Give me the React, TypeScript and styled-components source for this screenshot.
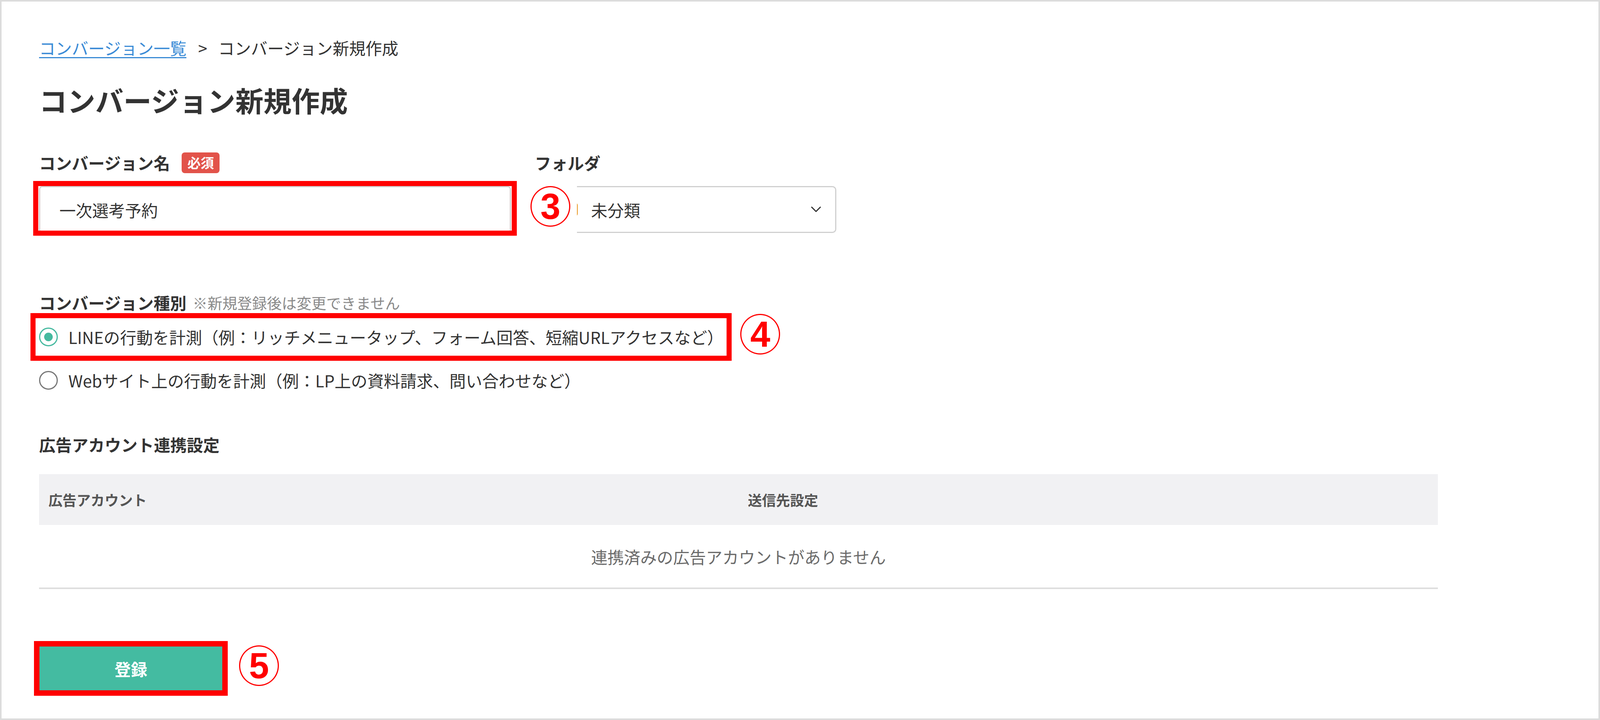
import React from "react";
import styled, { createGlobalStyle } from "styled-components";

const GlobalStyle = createGlobalStyle`
  html, body { margin: 0; padding: 0; background: #ffffff; }
  * { box-sizing: border-box; }
`;

const FONT = `"Noto Sans CJK JP", "Noto Sans", sans-serif`;

const Frame = styled.div`
  width: 100%;
  height: 100vh;
  min-height: 1842px;
  border: 4px solid #dcdcdc;
  padding: 88px 0 0 96px;
  background: #ffffff;
  font-family: ${FONT};
  color: #333333;
  display: flex;
  flex-direction: column;
  align-items: flex-start;
  overflow: hidden;
`;

const Breadcrumb = styled.nav`
  display: flex;
  align-items: center;
  height: 60px;
  font-size: 42px;
  line-height: 60px;
`;

const CrumbLink = styled.a`
  color: #3b8bd6;
  text-decoration: underline;
  text-decoration-thickness: 3px;
  text-underline-offset: 6px;
  cursor: pointer;
`;

const CrumbSep = styled.span`
  margin: 0 28px 0 30px;
  color: #333333;
`;

const Title = styled.h1`
  margin: 53px 0 0;
  font-size: 72px;
  line-height: 100px;
  font-weight: 700;
  color: #333333;
`;

const FormRow = styled.div`
  display: flex;
  gap: 61px;
  margin-top: 81px;
`;

const Field = styled.div`
  display: flex;
  flex-direction: column;
  gap: 30px;
`;

const LabelRow = styled.div<{ $mt?: number }>`
  display: flex;
  align-items: center;
  height: 60px;
  gap: 30px;
  margin-top: ${(p) => p.$mt ?? 0}px;
  font-size: 42px;
  line-height: 60px;
  font-weight: 700;
  color: #333333;
`;

const Note = styled.span`
  margin-left: -14px;
  font-size: 38px;
  font-weight: 400;
  color: #8a8a8a;
`;

const Badge = styled.span`
  display: inline-flex;
  align-items: center;
  justify-content: center;
  width: 97px;
  height: 53px;
  border-radius: 8px;
  background: #e2534a;
  color: #ffffff;
  font-size: 34px;
  line-height: 1;
  font-weight: 700;
`;

const InputWrap = styled.div`
  position: relative;
  width: 1208px;
  height: 120px;
`;

const TextInput = styled.input`
  width: 100%;
  height: 100%;
  border: 3px solid #d0d0d0;
  border-radius: 8px;
  padding: 0 0 0 49px;
  font-family: ${FONT};
  font-size: 42px;
  color: #333333;
  background: #ffffff;
  outline: none;
`;

const SelectBox = styled.div`
  position: relative;
  width: 772px;
  height: 120px;
  border: 3px solid #d0d0d0;
  border-radius: 10px;
  padding: 0 36px 0 77px;
  display: flex;
  align-items: center;
  font-size: 42px;
  color: #333333;
  background: #ffffff;
`;

const Chip = styled.span`
  width: 30px;
  height: 34px;
  border-radius: 6px;
  background: #e8961e;
  margin-right: 34px;
  flex: none;
`;

const SelectValue = styled.span`
  flex: 1;
`;

const RedBox = styled.div<{ $l: number; $t: number; $r: number; $b: number; $w?: number }>`
  position: absolute;
  left: ${(p) => p.$l}px;
  top: ${(p) => p.$t}px;
  right: ${(p) => p.$r}px;
  bottom: ${(p) => p.$b}px;
  border: ${(p) => p.$w ?? 13}px solid #ff0000;
  pointer-events: none;
`;

const CircleCover = styled.div`
  position: absolute;
  left: -46px;
  top: -12px;
  width: 151px;
  height: 136px;
  background: #ffffff;
  padding: 9px 0 0 32px;
`;

const Circled = styled.div`
  width: 102px;
  height: 104px;
  border: 3px solid #ff0000;
  border-radius: 50%;
  background: #ffffff;
  display: flex;
  align-items: center;
  justify-content: center;
  font-family: "Liberation Sans", Arial, sans-serif;
  font-weight: 700;
  font-size: 92px;
  line-height: 1;
  color: #ff0000;
`;

const FloatCircle = styled.div<{ $gap: number; $t: number }>`
  position: absolute;
  left: calc(100% + ${(p) => p.$gap}px);
  top: ${(p) => p.$t}px;
`;

const RadioList = styled.div`
  display: flex;
  flex-direction: column;
  align-items: flex-start;
  gap: 51px;
  margin-top: 28px;
`;

const RadioRow = styled.label`
  position: relative;
  display: flex;
  align-items: center;
  height: 60px;
  gap: 27px;
  font-size: 42px;
  line-height: 60px;
  color: #333333;
`;

const RadioCircle = styled.span<{ $checked?: boolean }>`
  width: 48px;
  height: 48px;
  border-radius: 50%;
  border: 3.5px solid ${(p) => (p.$checked ? "#45b99f" : "#777777")};
  display: flex;
  align-items: center;
  justify-content: center;
  flex: none;
  &::after {
    content: "";
    width: 22px;
    height: 22px;
    border-radius: 50%;
    background: ${(p) => (p.$checked ? "#45b99f" : "transparent")};
  }
`;

const Table = styled.div`
  width: 3581px;
  margin-top: 46px;
`;

const TableHead = styled.div`
  display: grid;
  grid-template-columns: 1fr 1fr;
  align-items: center;
  height: 130px;
  background: #f1f1f3;
  font-size: 36px;
  font-weight: 700;
  color: #555555;
`;

const HeadCell = styled.div`
  padding-left: 24px;
`;

const TableEmpty = styled.div`
  height: 164px;
  border-bottom: 4px solid #dedede;
  display: flex;
  align-items: center;
  justify-content: center;
  font-size: 42px;
  color: #6b6b6b;
`;

const ButtonWrap = styled.div`
  position: relative;
  margin-top: 145px;
`;

const SubmitButton = styled.button`
  width: 470px;
  height: 116px;
  border: none;
  border-radius: 4px;
  background: #44bba1;
  color: #ffffff;
  font-family: ${FONT};
  font-size: 42px;
  font-weight: 700;
  cursor: pointer;
`;

const Chevron = () => (
  <svg width="26" height="16" viewBox="0 0 26 16" fill="none">
    <polyline points="2,2 13,13 24,2" stroke="#333" strokeWidth="3" strokeLinecap="round" strokeLinejoin="round" />
  </svg>
);

export default function App() {
  return (
    <>
      <GlobalStyle />
      <Frame>
        <Breadcrumb>
          <CrumbLink>コンバージョン一覧</CrumbLink>
          <CrumbSep>&gt;</CrumbSep>
          <span>コンバージョン新規作成</span>
        </Breadcrumb>
        <Title>コンバージョン新規作成</Title>

        <FormRow>
          <Field>
            <LabelRow>
              コンバージョン名<Badge>必須</Badge>
            </LabelRow>
            <InputWrap>
              <TextInput readOnly value="一次選考予約" />
              <RedBox $l={-15} $t={-13} $r={-15} $b={-7} />
            </InputWrap>
          </Field>
          <Field>
            <LabelRow>フォルダ</LabelRow>
            <SelectBox>
              <Chip />
              <SelectValue>未分類</SelectValue>
              <Chevron />
              <CircleCover>
                <Circled>3</Circled>
              </CircleCover>
            </SelectBox>
          </Field>
        </FormRow>

        <LabelRow $mt={148}>
          コンバージョン種別<Note>※新規登録後は変更できません</Note>
        </LabelRow>
        <RadioList>
          <RadioRow>
            <RadioCircle $checked />
            LINEの行動を計測（例：リッチメニュータップ、フォーム回答、短縮URLアクセスなど）
            <RedBox $l={-22} $t={-31} $r={-21} $b={-31} />
            <FloatCircle $gap={43} $t={-29}>
              <Circled>4</Circled>
            </FloatCircle>
          </RadioRow>
          <RadioRow>
            <RadioCircle />
            Webサイト上の行動を計測（例：LP上の資料請求、問い合わせなど）
          </RadioRow>
        </RadioList>

        <LabelRow $mt={104}>広告アカウント連携設定</LabelRow>
        <Table>
          <TableHead>
            <HeadCell>広告アカウント</HeadCell>
            <HeadCell>送信先設定</HeadCell>
          </TableHead>
          <TableEmpty>連携済みの広告アカウントがありません</TableEmpty>
        </Table>

        <ButtonWrap>
          <SubmitButton>登録</SubmitButton>
          <RedBox $l={-13} $t={-12} $r={-13} $b={-12} $w={14} />
          <FloatCircle $gap={42} $t={-1}>
            <Circled>5</Circled>
          </FloatCircle>
        </ButtonWrap>
      </Frame>
    </>
  );
}
